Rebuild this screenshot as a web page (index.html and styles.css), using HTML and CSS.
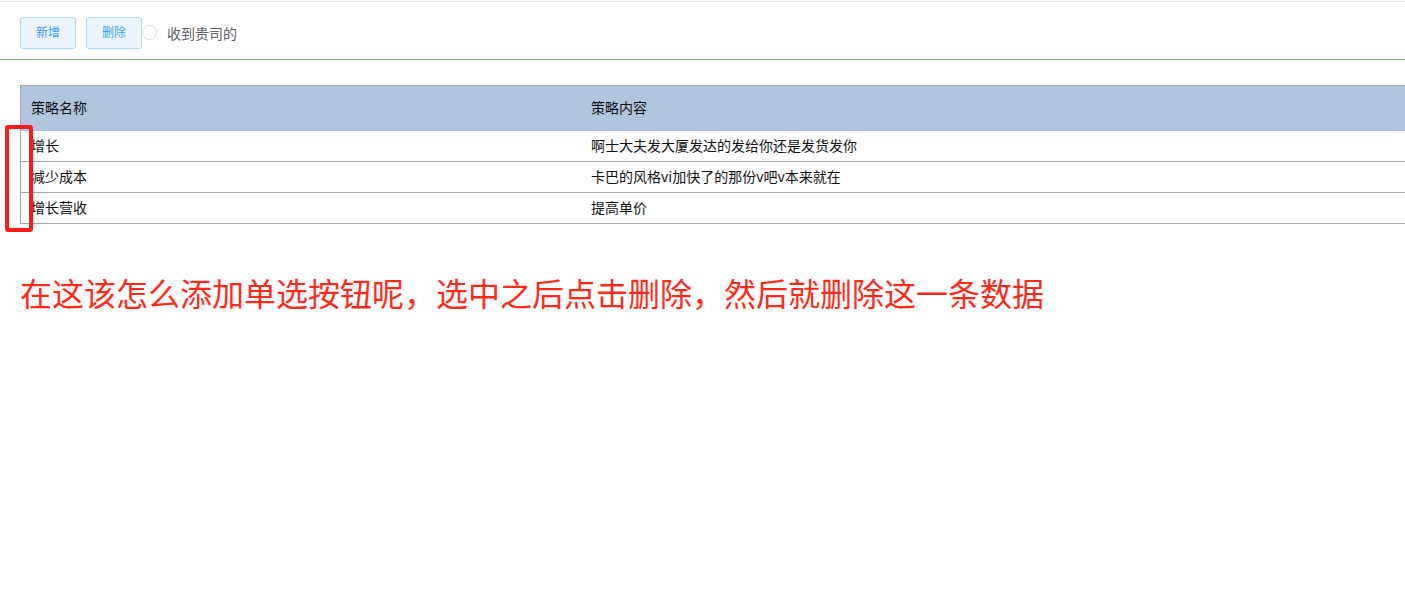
FILE: index.html
```html
<!DOCTYPE html>
<html lang="zh">
<head>
<meta charset="UTF-8">
<title>策略列表</title>
<link rel="stylesheet" href="styles.css">
</head>
<body>
<div class="page">
    <div class="toolbar">
        <button class="btn">新增</button>
        <button class="btn">删除</button>
        <label class="radio"><span class="radio-dot"></span>收到贵司的</label>
    </div>

    <table class="grid">
        <thead>
            <tr>
                <th class="col-name">策略名称</th>
                <th>策略内容</th>
            </tr>
        </thead>
        <tbody>
            <tr><td>增长</td><td>啊士大夫发大厦发达的发给你还是发货发你</td></tr>
            <tr><td>减少成本</td><td>卡巴的风格vi加快了的那份v吧v本来就在</td></tr>
            <tr><td>增长营收</td><td>提高单价</td></tr>
        </tbody>
    </table>

    <p class="note">在这该怎么添加单选按钮呢，选中之后点击删除，然后就删除这一条数据</p>

    <div class="mark"></div>
</div>
</body>
</html>
```

FILE: styles.css
```css
/* 页面样式 */
body {
    margin: 0;
    padding: 0;
    font-family: "Liberation Sans", "Noto Sans CJK SC", sans-serif;
    background: #fff;
    overflow: hidden;
}

.page {
    position: relative;
    margin-top: 1px;
    border-top: 1px solid #e4e4e4;
}

.toolbar {
    display: flex;
    align-items: center;
    height: 53px;
    padding: 4px 0 0 20px;
    border-bottom: 1px solid #94b28e;
}

.btn {
    width: 56px;
    height: 32px;
    margin-right: 10px;
    padding: 0 0 2px;
    background: #ecf5ff;
    border: 1px solid #b3d8ff;
    border-radius: 3px;
    color: #409eff;
    font-size: 12px;
    font-family: "Noto Sans CJK SC", sans-serif;
}

.btn + .btn {
    margin-right: 0;
}

.radio {
    display: flex;
    align-items: center;
    font-size: 14px;
    color: #606266;
    font-family: "Noto Sans CJK SC", sans-serif;
}

.radio-dot {
    width: 13px;
    height: 13px;
    margin-right: 10px;
    border: 1px solid #dcdfe6;
    border-radius: 50%;
}

.grid {
    margin: 25px 0 0 20px;
    width: 1400px;
    border-collapse: collapse;
    font-size: 14px;
    font-family: "Noto Sans CJK SC", sans-serif;
    color: #111;
}

.grid th {
    height: 42px;
    padding: 0 10px 3px;
    text-align: left;
    font-weight: normal;
    background: #b0c4de;
    border-top: 1px solid #a9a9a9;
}

.grid th:first-child,
.grid td:first-child {
    border-left: 1px solid #a9a9a9;
}

.grid .col-name {
    width: 540px;
}

.grid td {
    height: 27px;
    padding: 0 10px 3px;
    border-bottom: 1px solid #a9a9a9;
}

.note {
    margin: 48px 0 0 20px;
    font-size: 32px;
    color: #ff2a1a;
    font-family: "Noto Sans CJK SC", sans-serif;
    line-height: 40px;
}

.mark {
    position: absolute;
    left: 5px;
    top: 123px;
    width: 20px;
    height: 99px;
    border: 4px solid #ff1a1a;
    border-radius: 3px;
}
```
